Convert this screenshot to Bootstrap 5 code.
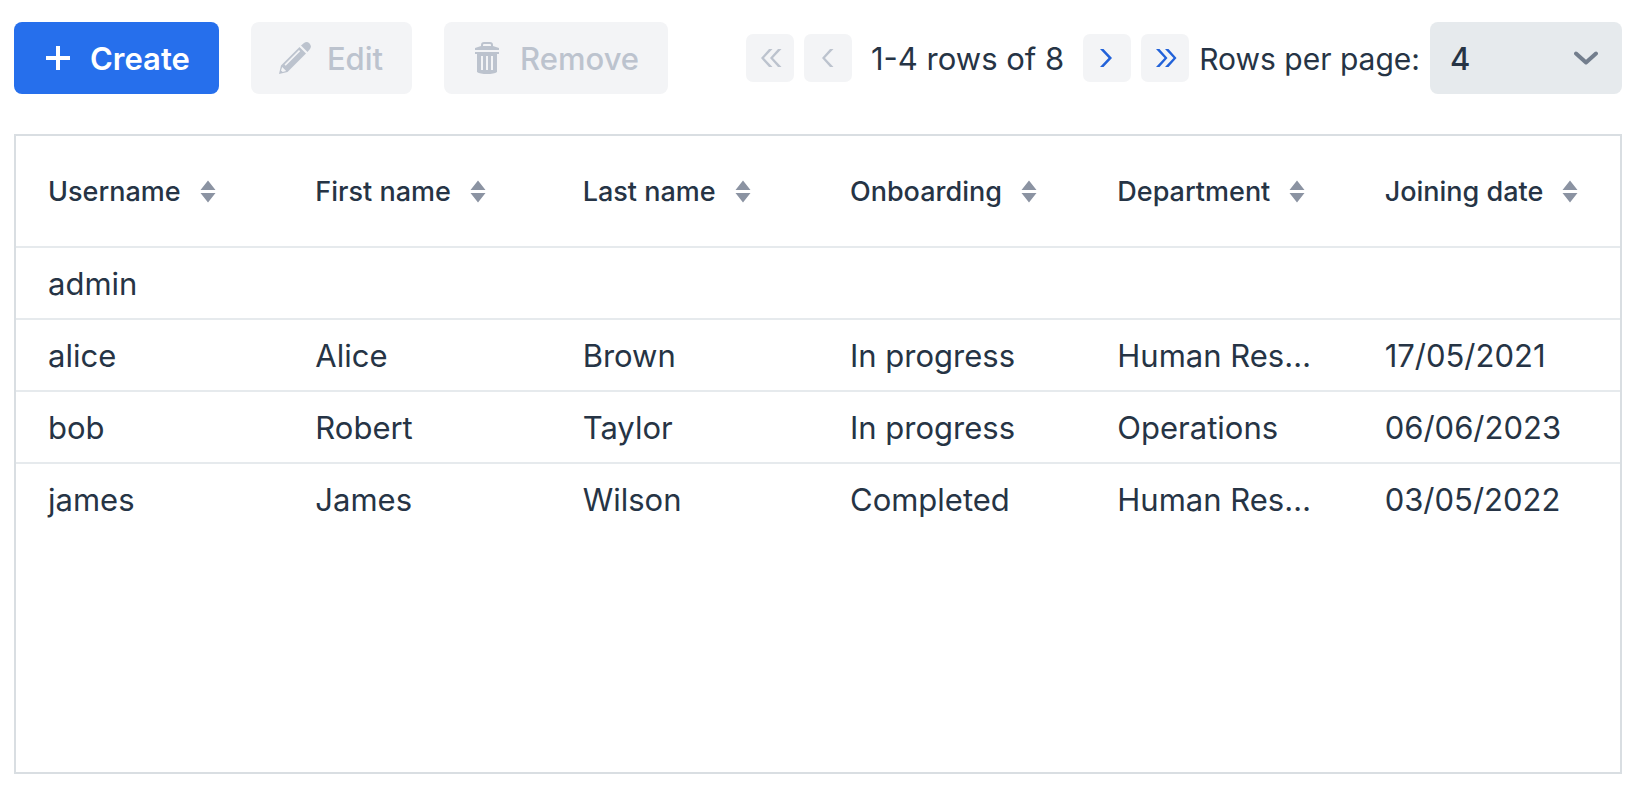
<!DOCTYPE html>
<html lang="en">
<head>
<meta charset="utf-8">
<meta name="viewport" content="width=device-width, initial-scale=1">
<title>Users</title>
<link href="https://cdn.jsdelivr.net/npm/bootstrap@5.3.0/dist/css/bootstrap.min.css" rel="stylesheet">
<style>
  :root { --ink: #263445; --line: #d9dee2; --row-line: #e6eaed; --soft: #f3f4f6; --muted: #bcc3ce; --blue: #266fec; }
  body { font-family: Inter, "Liberation Sans", sans-serif; font-size: 31px; line-height: 40px; color: var(--ink); background: #fff; }
  .page { padding: 22px 14px 12px; gap: 40px; }
  .actions { gap: 32px; }
  .tool { height: 72px; padding: 0 29px 0 28px; gap: 16px; border: 0; border-radius: 8px; font-size: 31px; font-weight: 500; line-height: 40px; }
  .tool:disabled { background: var(--soft); color: var(--muted); opacity: 1; }
  .tool-main, .tool-main:hover { background: var(--blue); color: #fff; font-weight: 600; }
  .tool span, .pager label, .status { padding-top: 2px; }
  .pager { gap: 10px; }
  .pager label { font-size: 30px; }
  .step { width: 48px; height: 48px; padding: 0; border: 0; border-radius: 7px; background: var(--soft); color: #2262d9; }
  .step:disabled { background: var(--soft); color: var(--muted); opacity: 1; }
  .status { padding-left: 9px; padding-right: 9px; }
  .size { width: 192px; height: 72px; padding: 2px 20px 0; border: 0; border-radius: 8px; font-size: 31px; font-weight: 500; line-height: 40px; color: var(--ink); background-color: #e6eaed;
    background-image: url("data:image/svg+xml,%3Csvg xmlns='http://www.w3.org/2000/svg' viewBox='0 0 24 24' fill='none' stroke='%23737e8d' stroke-width='4' stroke-linecap='round' stroke-linejoin='round'%3E%3Cpath d='M2 7.500l10 9 10-9'/%3E%3C/svg%3E"); background-size: 24px 24px; background-position: right 24px center; }
  .frame { border: 2px solid var(--line); min-height: 640px; }
  .grid { table-layout: fixed; border-collapse: separate; border-spacing: 0; color: var(--ink); }
  .grid th, .grid td { border-bottom: 2px solid var(--row-line); white-space: nowrap; overflow: hidden; text-overflow: ellipsis; }
  .grid th { height: 112px; padding: 2px 8px 0 32px; }
  .grid td { height: 72px; padding: 2px 32px 0; }
  .grid tbody tr:last-child td { border-bottom-color: transparent; }
  .sort { gap: 19px; color: inherit; font-size: 27px; font-weight: 500; line-height: 40px; }
</style>
</head>
<body>
<main class="page d-flex flex-column min-vh-100">
  <div class="d-flex align-items-center justify-content-between">
    <div class="actions d-flex">
      <button type="button" class="tool tool-main btn d-flex align-items-center">
        <svg width="32" height="32" viewBox="0 0 32 32" stroke="currentColor" stroke-width="4" aria-hidden="true"><path d="M4 16h24M16 4v24"/></svg><span>Create</span></button>
      <button type="button" class="tool btn d-flex align-items-center" disabled>
        <svg width="32" height="32" viewBox="0 0 32 32" fill="currentColor" fill-rule="evenodd" aria-hidden="true"><path d="M20.500 5L2 23.500 0 32l8.500-2L27 11.500zM5.500 22.500L20 8l1.200 1.200L6.700 23.700zM3.200 25l4 4-3.500 1L2 28.500z"/><path d="M22 3.500L25 1q3-2 5.500.5T31 7l-2.500 3z"/></svg><span>Edit</span></button>
      <button type="button" class="tool btn d-flex align-items-center" disabled>
        <svg width="32" height="32" viewBox="0 0 32 32" fill="currentColor" fill-rule="evenodd" aria-hidden="true"><path d="M9 4V3q0-3 3-3h6q3 0 3 3v1l6 2v2H3V6zm2 0h8V3q0-1-1-1h-6q-1 0-1 1z"/><path d="M3 10h24v2h-2v18q-3 2-10 2T5 30V12H3zm6 4v14h2V14zm5 0v14h2V14zm5 0v14h2V14z"/></svg><span>Remove</span></button>
    </div>
    <div class="pager d-flex align-items-center text-nowrap">
      <button type="button" class="step btn d-flex align-items-center justify-content-center" aria-label="First page" disabled><svg width="24" height="24" viewBox="0 0 24 24" fill="currentColor" aria-hidden="true"><path d="M11 3h3.500L6 12l8.500 9H11L3 12zM20 3h3.500L15 12l8.500 9H20L12 12z"/></svg></button>
      <button type="button" class="step btn d-flex align-items-center justify-content-center" aria-label="Previous page" disabled><svg width="24" height="24" viewBox="0 0 24 24" fill="currentColor" aria-hidden="true"><path d="M14 3h3.500L9 12l8.500 9H14L6 12z"/></svg></button>
      <span class="status">1-4 rows of 8</span>
      <button type="button" class="step btn d-flex align-items-center justify-content-center" aria-label="Next page"><svg width="24" height="24" viewBox="0 0 24 24" fill="currentColor" aria-hidden="true"><path d="M8.500 3H5l8.500 9L5 21h3.500l8.500-9z"/></svg></button>
      <button type="button" class="step btn d-flex align-items-center justify-content-center" aria-label="Last page"><svg width="24" height="24" viewBox="0 0 24 24" fill="currentColor" aria-hidden="true"><path d="M6.500 3H3l8.500 9L3 21h3.500l8-9zM15.500 3H12l8.500 9-8.500 9h3.500l8-9z"/></svg></button>
      <label for="page-size">Rows per page:</label>
      <select id="page-size" class="size form-select"><option>4</option><option>8</option></select>
    </div>
  </div>
  <div class="frame flex-grow-1">
    <svg class="d-none"><symbol id="sorter" viewBox="0 0 16 24"><path d="M8 .5l7.500 9.500H.5zM.5 13h15L8 22.500z" fill="#8b93a2"/></symbol></svg>
    <table class="grid w-100">
      <thead><tr>
        <th scope="col"><button type="button" class="sort btn border-0 p-0 d-flex align-items-center">Username<svg width="16" height="24" aria-hidden="true"><use href="#sorter"/></svg></button></th>
        <th scope="col"><button type="button" class="sort btn border-0 p-0 d-flex align-items-center">First name<svg width="16" height="24" aria-hidden="true"><use href="#sorter"/></svg></button></th>
        <th scope="col"><button type="button" class="sort btn border-0 p-0 d-flex align-items-center">Last name<svg width="16" height="24" aria-hidden="true"><use href="#sorter"/></svg></button></th>
        <th scope="col"><button type="button" class="sort btn border-0 p-0 d-flex align-items-center">Onboarding<svg width="16" height="24" aria-hidden="true"><use href="#sorter"/></svg></button></th>
        <th scope="col"><button type="button" class="sort btn border-0 p-0 d-flex align-items-center">Department<svg width="16" height="24" aria-hidden="true"><use href="#sorter"/></svg></button></th>
        <th scope="col"><button type="button" class="sort btn border-0 p-0 d-flex align-items-center">Joining date<svg width="16" height="24" aria-hidden="true"><use href="#sorter"/></svg></button></th>
      </tr></thead>
      <tbody>
        <tr><td>admin</td><td></td><td></td><td></td><td></td><td></td></tr>
        <tr><td>alice</td><td>Alice</td><td>Brown</td><td>In progress</td><td>Human Resources</td><td>17/05/2021</td></tr>
        <tr><td>bob</td><td>Robert</td><td>Taylor</td><td>In progress</td><td>Operations</td><td>06/06/2023</td></tr>
        <tr><td>james</td><td>James</td><td>Wilson</td><td>Completed</td><td>Human Resources</td><td>03/05/2022</td></tr>
      </tbody>
    </table>
  </div>
</main>
<script src="https://cdn.jsdelivr.net/npm/bootstrap@5.3.0/dist/js/bootstrap.bundle.min.js"></script>
</body>
</html>
